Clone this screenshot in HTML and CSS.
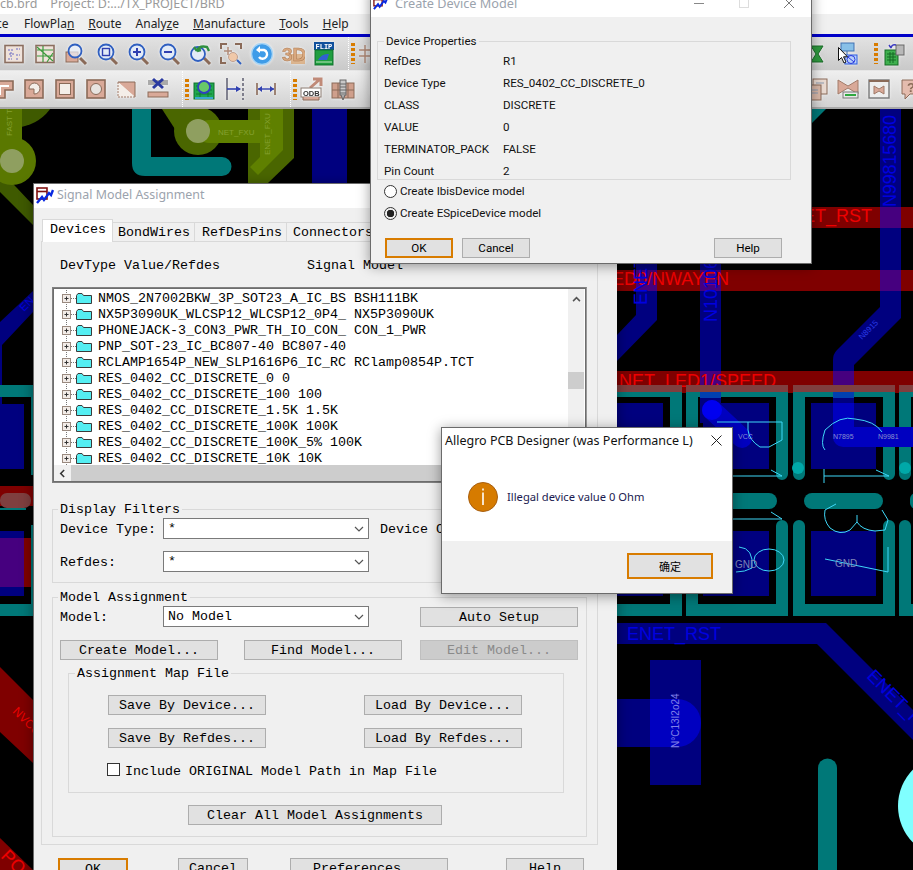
FILE: index.html
```html
<!DOCTYPE html>
<html lang="en">
<head>
    <meta charset="UTF-8">
    <meta name="viewport" content="width=device-width, initial-scale=1.0">
    <title>Allegro PCB Designer</title>
    <link rel="stylesheet" href="styles.css">
</head>
<body>
    <!-- shared little drawings -->
    <svg class="defs" width="0" height="0">
        <symbol id="tree-row" viewBox="0 0 36 16">
            <path d="M4.5 0V16" stroke="#777" stroke-dasharray="1 1"/>
            <path d="M9 8.5H14" stroke="#777" stroke-dasharray="1 1"/>
            <rect x="0.5" y="4.5" width="8" height="8" fill="#f2ece8" stroke="#9a8a80"/>
            <path d="M2.5 8.5H6.5M4.5 6.5V10.5" stroke="#333"/>
            <path d="M14.5 13.5V5.5L16 3.5H20L21.5 5.5H29.5V13.5Z" fill="#55eef2" stroke="#3a3a3a"/>
        </symbol>
        <symbol id="chev" viewBox="0 0 10 6">
            <path d="M1 1L5 5L9 1" fill="none" stroke="#555" stroke-width="1.2"/>
        </symbol>
        <symbol id="app-icon" viewBox="0 0 18 17">
            <rect x="1" y="1" width="10" height="11" fill="#fff" stroke="#7f1010" stroke-width="1.6"/>
            <path d="M1 4.5H11" stroke="#7f1010" stroke-width="1.6"/>
            <path d="M1 16L6 10L8 13L13 6L15 8L17 3" fill="none" stroke="#0a2ae0" stroke-width="2.4"/>
        </symbol>
    </svg>

    <!-- board artwork behind everything -->
    <svg class="board" viewBox="0 0 913 870" width="913" height="870">
        <!-- olive traces top left -->
        <circle cx="12" cy="80" r="48" fill="#3f5a00"/>
        <path d="M0 170L33 205V225L0 192Z" fill="#3f5a00"/>
        <rect x="0" y="100" width="22" height="50" fill="#5a7800"/>
        <circle cx="12" cy="161" r="24" fill="#5a7800"/>
        <circle cx="12" cy="161" r="12" fill="#8f9f60"/>
        <text x="12" y="136" transform="rotate(-90 12 136)" class="t-olive">FAST TX</text>
        <path d="M162 109H190L205 125L182 140Z" fill="#4a6600"/>
        <circle cx="198" cy="131" r="24" fill="#4a6600"/>
        <path d="M248 109H294V158L268 183H248V170L248 165Z" fill="#4a6600"/>
        <path d="M260 109H283V150L258 175L250 167L260 157Z" fill="#5f8000"/>
        <rect x="198" y="120" width="78" height="23" rx="11" fill="#5f8000"/>
        <circle cx="198" cy="131" r="12" fill="#8f9f60"/>
        <text x="218" y="135" class="t-olive">NET_FXU</text>
        <text x="270" y="155" transform="rotate(-90 270 155)" class="t-olive">ENET_FXU</text>
        <path d="M132 109H151V157H222A9.5 9.5 0 0 1 222 176H145Q132 176 132 163Z" fill="#007878"/>
        <rect x="312" y="109" width="35" height="74" fill="#00007f"/>

        <!-- right side nets -->
        <path d="M811 109H826L811 124Z" fill="#007878"/>
        <rect x="811" y="207" width="102" height="21" fill="#7f0000"/>
        <rect x="617" y="270" width="296" height="21" fill="#7f0000"/>
        <rect x="617" y="371" width="296" height="22" fill="#7f0000"/>
        <path d="M880 109H901V318L854 365V440H833V360Q833 354 837 350L880 307Z" fill="#00007f"/>
        <path d="M636 263H657V320L617 361V335L636 315Z" fill="#00007f"/>
        <rect x="700" y="263" width="21" height="160" fill="#00007f"/>
        <g fill="#46007f">
            <rect x="880" y="207" width="21" height="21"/>
            <rect x="880" y="270" width="21" height="21"/>
            <rect x="700" y="270" width="21" height="21"/>
            <rect x="636" y="270" width="21" height="21"/>
            <rect x="700" y="371" width="21" height="22"/>
            <rect x="833" y="371" width="21" height="22"/>
        </g>
        <text x="872" y="222" text-anchor="end" class="t-red">ENET_RST</text>
        <text x="729" y="285" text-anchor="end" class="t-red">NET_LED0/NWAYEN</text>
        <text x="619" y="387" class="t-red">NET_LED1/SPEED</text>
        <text x="896" y="207" transform="rotate(-90 896 207)" class="t-blue" textLength="92">N99815680</text>
        <text x="717" y="322" transform="rotate(-90 717 322)" class="t-blue">N101068</text>
        <text x="647" y="305" transform="rotate(-90 647 305)" class="t-blue">ENET</text>
        <text x="862" y="340" transform="rotate(-45 862 340)" class="t-tiny">N8915</text>

        <!-- pads -->
        <g fill="none" stroke="#007878" stroke-width="12" stroke-linecap="round">
            <path d="M610 391H676V474"/>
            <path d="M692 474V391H782V474"/>
            <path d="M799 474V391H889V474"/>
            <path d="M905 474V391H925"/>
            <path d="M610 610H676V526"/>
            <path d="M692 526V610H782V526"/>
            <path d="M799 526V610H889V526"/>
            <path d="M905 526V610H925"/>
        </g>
        <g fill="#7f3f3f">
            <rect x="617" y="385" width="65" height="7"/>
            <rect x="686" y="385" width="102" height="7"/>
            <rect x="793" y="385" width="102" height="7"/>
            <rect x="899" y="385" width="14" height="7"/>
        </g>
        <g fill="#00007f">
            <rect x="617" y="403" width="46" height="66"/>
            <rect x="703" y="403" width="66" height="66"/>
            <rect x="811" y="403" width="65" height="66"/>
            <rect x="617" y="531" width="46" height="65"/>
            <rect x="703" y="531" width="66" height="65"/>
            <rect x="811" y="531" width="65" height="65"/>
        </g>
        <rect x="700" y="392" width="21" height="6" fill="#0040b0"/>
        <rect x="833" y="392" width="21" height="6" fill="#0040b0"/>
        <path d="M712 410L742 438" stroke="#0000c0" stroke-width="20" stroke-linecap="round"/>
        <circle cx="712" cy="410" r="10" fill="#0000f0"/>
        <rect x="833" y="403" width="21" height="34" fill="#0000c0"/>
        <path d="M843 437H913" stroke="#0000c0" stroke-width="20" stroke-linecap="round"/>
        <circle cx="798" cy="468" r="6" fill="#00a8a8"/>
        <circle cx="905" cy="468" r="6" fill="#00a8a8"/>
        <rect x="700" y="493" width="77" height="16" rx="8" fill="#007878"/>
        <rect x="804" y="493" width="79" height="16" rx="8" fill="#007878"/>
        <rect x="910" y="493" width="12" height="16" rx="6" fill="#007878"/>

        <!-- silk screen -->
        <g fill="none" stroke="#3fd8f8">
            <path d="M717 422H782V440L769 447H760Q749 440 748 430V422"/>
            <path d="M825 450Q820 445 825 430Q840 415 855 419Q875 421 882 432"/>
            <path d="M733 476H782L771 470"/>
            <path d="M824 469V483M824 476H889L876 470"/>
            <path d="M733 519H782L771 512"/>
            <path d="M836 504L825 510Q823 520 830 528Q840 536 850 530L857 522V515M857 522Q862 530 875 531L885 530L888 520L882 510"/>
            <ellipse cx="769" cy="560" rx="15" ry="11"/>
            <path d="M739 547Q754 548 752 568Q745 572 736 572"/>
            <path d="M825 559L888 572V547"/>
        </g>
        <text x="735" y="568" class="t-grey">GND</text>
        <text x="835" y="567" class="t-grey">GND</text>
        <text x="833" y="439" class="t-grey-s">N7895</text>
        <text x="878" y="439" class="t-grey-s">N9981</text>
        <text x="738" y="439" class="t-grey-s">VCC</text>

        <!-- lower right -->
        <path d="M617 623H826L913 710V740L817 644H617Z" fill="#00007f"/>
        <text x="627" y="640" class="t-blue">ENET_RST</text>
        <text x="866" y="677" transform="rotate(45 866 677)" class="t-blue">ENET_RST</text>
        <rect x="650" y="660" width="51" height="125" fill="#00007f"/>
        <path d="M617 699H677A24 24 0 0 1 677 747H617Z" fill="#00007f"/>
        <path d="M650 699H677A24 24 0 0 1 677 747H650Z" fill="#0000c0"/>
        <text x="679" y="748" transform="rotate(-90 679 748)" class="t-pale">N°C13I2o24</text>
        <path d="M818 870V768A9.5 9.5 0 0 1 837 768V870Z" fill="#007878"/>
        <circle cx="950" cy="806" r="52" fill="#80ffff"/>

        <!-- left strip -->
        <path d="M33 291V312L2 345V440H0V322Z" fill="#00007f"/>
        <text x="24" y="312" transform="rotate(-45 24 312)" class="t-small-blue">EN</text>
        <rect x="0" y="385" width="33" height="12" fill="#007878"/>
        <rect x="31" y="385" width="2" height="90" fill="#007878"/>
        <rect x="0" y="404" width="24" height="65" fill="#00007f"/>
        <rect x="0" y="486" width="33" height="20" fill="#7f0000"/>
        <rect x="0" y="493" width="31" height="15" rx="7" fill="#7f3f3f"/>
        <rect x="0" y="508" width="26" height="2" fill="#007878"/>
        <rect x="31" y="525" width="2" height="80" fill="#007878"/>
        <rect x="0" y="531" width="24" height="65" fill="#00007f"/>
        <rect x="0" y="538" width="24" height="49" fill="#46007f"/>
        <rect x="24" y="538" width="7" height="49" fill="#7f0000"/>
        <rect x="0" y="604" width="33" height="12" fill="#007878"/>
        <path d="M0 667L33 700V763L0 732Z" fill="#7f0000"/>
        <text x="12" y="712" transform="rotate(45 12 712)" class="t-small-red">NVCC</text>
        <path d="M0 838L33 870H0Z" fill="#7f0000"/>
        <text x="0" y="857" transform="rotate(45 0 857)" class="t-red">PO</text>
    </svg>

    <!-- main application window -->
    <div class="app">
        <div class="app-title">cb.brd&nbsp;&nbsp;&nbsp;&nbsp;Project: D:.../TX_PROJECT/BRD</div>
        <div class="menu">
            <span class="cut">ce</span>
            <span>FlowPla<u>n</u></span>
            <span><u>R</u>oute</span>
            <span>Analy<u>z</u>e</span>
            <span><u>M</u>anufacture</span>
            <span><u>T</u>ools</span>
            <span><u>H</u>elp</span>
        </div>
        <div class="blue-rule"></div>

        <div class="toolbar tb-one">
            <div class="tool-group start-a">
                <span class="tool"><svg viewBox="0 0 24 24"><rect x="3" y="3.5" width="18" height="17" fill="#efe2da" stroke="#8b6f60" stroke-width="1.6"/><path d="M6 8H11M14 7H18M7 12H12M9 10V16M14 13H18M6 17H10M14 17H17" stroke="#6a6ac4" stroke-dasharray="2 1"/></svg></span>
                <span class="tool"><svg viewBox="0 0 24 24"><rect x="3" y="3.5" width="18" height="17" fill="#efe2da" stroke="#8b6f60" stroke-width="1.6"/><path d="M4 8H20M4 14H20M10 4V20M4 5L20 19M14 20L20 11" stroke="#3c9a3c" stroke-width="1.2"/></svg></span>
                <span class="tool"><svg viewBox="0 0 24 24"><path d="M16 16L22 22" stroke="#8a6a58" stroke-width="3"/><rect x="2" y="10" width="12" height="10" fill="#d9a998" stroke="#8a6a58"/><circle cx="11" cy="9" r="6.5" fill="#e8eef8" fill-opacity=".7" stroke="#2f5fc0" stroke-width="1.8"/></svg></span>
                <span class="tool"><svg viewBox="0 0 24 24"><path d="M16 16L22 22" stroke="#8a6a58" stroke-width="3"/><circle cx="11" cy="10" r="7.5" fill="#e3ebf7" stroke="#2f5fc0" stroke-width="1.8"/><rect x="7.5" y="6.5" width="7" height="7" fill="none" stroke="#2f3fb0" stroke-width="1.4"/></svg></span>
                <span class="tool"><svg viewBox="0 0 24 24"><path d="M16 16L22 22" stroke="#8a6a58" stroke-width="3"/><circle cx="11" cy="10" r="7.5" fill="#e3ebf7" stroke="#2f5fc0" stroke-width="1.8"/><path d="M7 10H15M11 6V14" stroke="#2f3fb0" stroke-width="2"/></svg></span>
                <span class="tool"><svg viewBox="0 0 24 24"><path d="M16 16L22 22" stroke="#8a6a58" stroke-width="3"/><circle cx="11" cy="10" r="7.5" fill="#e3ebf7" stroke="#2f5fc0" stroke-width="1.8"/><path d="M7 10H15" stroke="#2f3fb0" stroke-width="2"/></svg></span>
                <span class="tool"><svg viewBox="0 0 24 24"><path d="M16 16L22 22" stroke="#8a6a58" stroke-width="3"/><circle cx="10" cy="12" r="7" fill="#e3ebf7" stroke="#2f5fc0" stroke-width="1.8"/><path d="M9 9Q11 3 19 5L21 9M9 9L6 5M9 9L13 8" fill="none" stroke="#2f8f3f" stroke-width="2.4"/></svg></span>
                <span class="tool"><svg viewBox="0 0 24 24"><path d="M2 7V2H8M16 2H22V7M2 15V21H7" fill="none" stroke="#8a6a58" stroke-width="2"/><path d="M9 5V13M5 9H13" stroke="#b08a78" stroke-width="1.5"/><circle cx="14" cy="15" r="4.5" fill="#f0c8a8" stroke="#c0a090"/><path d="M18 18L22 22" stroke="#2f5fc0" stroke-width="2"/></svg></span>
                <span class="tool"><svg viewBox="0 0 24 24"><circle cx="12" cy="12" r="10.5" fill="#3f9ce8" stroke="#a8d4f4" stroke-width="1.4"/><path d="M8 8H14A4.5 4.5 0 1 1 9 15" fill="none" stroke="#fff" stroke-width="2.4"/><path d="M10 4L6 8L10 11Z" fill="#fff"/></svg></span>
                <span class="tool"><svg viewBox="0 0 24 24"><rect x="10" y="12" width="14" height="10" fill="#d8a878" opacity=".8"/><text x="1" y="19" class="ic-3d">3D</text></svg></span>
                <span class="tool"><svg viewBox="0 0 24 24"><rect x="2" y="0" width="20" height="8" fill="#10509c"/><text x="3.5" y="7" class="ic-flip">FLIP</text><rect x="3" y="8" width="18" height="15" fill="#1f9e3f" stroke="#0f6f2a"/><path d="M6 18Q10 11 17 12L15 18Z" fill="#3060d0"/><path d="M4 20H20" stroke="#bfe8c0"/></svg></span>
            </div>
            <span class="sep"></span><span class="grip"></span>
            <span class="tool"><svg viewBox="0 0 24 24"><path d="M1 8H23M1 14H23M7 3V21M13 3V21M19 3V21" stroke="#b08874" stroke-width="1.4"/></svg></span>

            <div class="tool-group right">
                <span class="tool"><svg viewBox="0 0 24 24"><path d="M6 4H18L13 12L18 20H6L11 12Z" fill="#2f9a3f" stroke="#1a6a28"/></svg></span>
                <span class="tool"><svg viewBox="0 0 24 24"><rect x="5" y="1" width="13" height="8" fill="#88c0e8" stroke="#4070b0"/><path d="M11 9V13" stroke="#4070b0"/><rect x="9" y="13" width="12" height="9" fill="#b8d0f8" stroke="#2a5ae0"/><circle cx="15" cy="17.5" r="4" fill="none" stroke="#2a3ae0"/><path d="M12 15L18 20" stroke="#2a3ae0"/></svg></span>
                <span class="sep"></span><span class="grip"></span>
                <span class="tool"><svg viewBox="0 0 24 24"><rect x="3" y="8" width="13" height="15" fill="#3fb04f" stroke="#146a24"/><path d="M5 12H14M5 15H14M5 18H14M8 10V21M11 10V21" stroke="#146a24"/><rect x="14" y="3" width="8" height="10" fill="#b8b8b8" stroke="#666"/><path d="M9 6Q10 2 14 3M9 6L7 3" fill="none" stroke="#3a3ac0" stroke-width="1.4"/></svg></span>
            </div>
        </div>

        <div class="toolbar tb-two">
            <div class="tool-group start-b">
                <span class="tool"><svg viewBox="0 0 24 24"><path d="M4 4H22V13H14V21H4Z" fill="#d9a998" stroke="#8a6a58" stroke-width="1.6"/><path d="M8 8H18V10H10V18H8Z" fill="#fff"/></svg></span>
                <span class="tool"><svg viewBox="0 0 24 24"><rect x="3" y="3" width="18" height="18" fill="#d9a998" stroke="#8a6a58" stroke-width="1.6"/><path d="M7 12A5.5 5.5 0 1 1 12 17V12Z" fill="#f4eee8" stroke="#8a6a58"/></svg></span>
                <span class="tool"><svg viewBox="0 0 24 24"><rect x="3" y="3" width="18" height="18" fill="#d9a998" stroke="#8a6a58" stroke-width="1.6"/><rect x="6.5" y="6.5" width="11" height="11" fill="#f4eee8" stroke="#8a6a58"/></svg></span>
                <span class="tool"><svg viewBox="0 0 24 24"><rect x="3" y="3" width="18" height="18" fill="#d9a998" stroke="#8a6a58" stroke-width="1.6"/><circle cx="12" cy="12" r="5.5" fill="#e8e4e0" stroke="#8a6a58"/></svg></span>
                <span class="tool"><svg viewBox="0 0 24 24"><path d="M3 5H20V20Z" fill="#d9a998"/><path d="M3 5V20H20" fill="#f4eee8" stroke="#a07a68" stroke-dasharray="2 1"/><path d="M3 5H20V20" fill="none" stroke="#8a6a58"/></svg></span>
                <span class="tool"><svg viewBox="0 0 24 24"><rect x="2" y="3" width="20" height="5" fill="#aaa"/><path d="M7 2L17 11M17 2L7 11" stroke="#2a3aa0" stroke-width="3"/><rect x="2" y="15" width="20" height="5" fill="#d9a998" stroke="#8a6a58"/></svg></span>
            </div>
            <span class="sep"></span><span class="grip"></span>
            <span class="tool"><svg viewBox="0 0 24 24"><rect x="2" y="6" width="20" height="16" fill="#1fa84f" stroke="#0f6f2a"/><path d="M4 9H20M4 13H20M4 17H20M8 7V20M16 7V20" stroke="#0f6f2a" stroke-width=".8"/><circle cx="12" cy="10" r="6" fill="#68c868" stroke="#3040c0" stroke-width="1.8"/><path d="M3 21H21" stroke="#3aa8d0" stroke-width="2"/></svg></span>
            <span class="tool"><svg viewBox="0 0 24 24"><path d="M4 1V23" stroke="#667" stroke-width="1.6"/><path d="M4 12H17" stroke="#3040b0" stroke-width="1.6"/><path d="M13 9L18 12L13 15Z" fill="#3040b0"/><path d="M20 1V23" stroke="#667" stroke-width="1.6" stroke-dasharray="3 2"/></svg></span>
            <span class="tool"><svg viewBox="0 0 24 24"><path d="M3 6V18M21 6V18" stroke="#8a6a58" stroke-width="1.6"/><path d="M4 12H20" stroke="#3040b0" stroke-width="1.4"/><path d="M8 9L4 12L8 15ZM16 9L20 12L16 15Z" fill="#3040b0"/></svg></span>
            <span class="sep"></span><span class="grip"></span>
            <span class="tool"><svg viewBox="0 0 24 24"><path d="M10 11L19 3M13 2H21V9" fill="none" stroke="#c08a78" stroke-width="3"/><rect x="1" y="11" width="20" height="9" fill="#fff" stroke="#8a7a70"/><text x="3" y="18.5" class="ic-odb">ODB</text><path d="M3 20V23H19V20" fill="#d9a998" stroke="#8a6a58"/></svg></span>
            <span class="tool"><svg viewBox="0 0 24 24"><rect x="1" y="6" width="22" height="15" fill="#cf9f8c" stroke="#8a6a58"/><path d="M1 13H23M7 6V21M17 6V21" stroke="#8a6a58"/><rect x="9" y="3" width="6" height="15" fill="#c8c8c8" stroke="#666"/><path d="M9 7H15M9 10H15M9 13H15M9 16H15M10 18L12 23L14 18" stroke="#666" fill="#aaa"/></svg></span>
            <span class="tool"><svg viewBox="0 0 24 24"><rect x="9" y="3" width="6" height="15" fill="#c8c8c8" stroke="#666"/><path d="M9 7H15M9 10H15M9 13H15M9 16H15" stroke="#666"/></svg></span>

            <div class="tool-group right last">
                <span class="tool"><svg viewBox="0 0 24 24"><rect x="8" y="2" width="14" height="15" fill="#eadbd2" stroke="#8a6a58"/><rect x="2" y="8" width="14" height="15" fill="#d9b8a8" stroke="#8a6a58"/><path d="M5 13H13M5 16H13M11 6H19" stroke="#8a9ab0"/></svg></span>
                <span class="tool"><svg viewBox="0 0 24 24"><path d="M2 3L12 9L22 3V17L12 11L2 17Z" fill="#d9a998" stroke="#a07a68"/><rect x="7" y="15" width="15" height="6" fill="#e8e8e8" stroke="#777"/><path d="M9 18H20" stroke="#2fa83f" stroke-width="2"/></svg></span>
                <span class="tool"><svg viewBox="0 0 24 24"><rect x="2" y="3" width="20" height="18" fill="#eee" stroke="#777" stroke-width="1.4"/><path d="M2 4H22" stroke="#8a6a58" stroke-width="2"/><path d="M7 9L12 12L17 9V17L12 14L7 17Z" fill="#d9a998" stroke="#a07a68"/></svg></span>
                <span class="tool"><svg viewBox="0 0 24 24"><path d="M4 3H22V17H12L7 22V17H4Z" fill="#e4bcae" stroke="#8a6a58"/><text x="9" y="15" class="ic-q">?</text></svg></span>
            </div>
        </div>
    </div>

    <!-- mouse pointer left over the toolbar -->
    <svg class="pointer" viewBox="0 0 10 17" width="10" height="17"><path d="M0.5 0.5V13.5L3.5 10.5L6 16L8 15L5.5 9.8H9.5Z" fill="#fff" stroke="#111"/></svg>

    <!-- Signal Model Assignment -->
    <div class="window signal">
        <div class="title-bar sig-title">
            <svg class="win-icon" width="18" height="17"><use href="#app-icon"/></svg>
            <span>Signal Model Assignment</span>
        </div>
        <div class="tabs">
            <span class="tab on">Devices</span>
            <span class="tab w-bond">BondWires</span>
            <span class="tab w-ref">RefDesPins</span>
            <span class="tab w-conn">Connectors</span>
        </div>
        <div class="panel">
            <div class="col-head"><span class="h-type">DevType Value/Refdes</span><span>Signal Model</span></div>
            <div class="list">
                <div class="list-top">
                    <div class="tree">
                        <div class="tree-row"><svg width="36" height="16"><use href="#tree-row"/></svg>NMOS_2N7002BKW_3P_SOT23_A_IC_BS BSH111BK</div>
                        <div class="tree-row"><svg width="36" height="16"><use href="#tree-row"/></svg>NX5P3090UK_WLCSP12_WLCSP12_0P4_ NX5P3090UK</div>
                        <div class="tree-row"><svg width="36" height="16"><use href="#tree-row"/></svg>PHONEJACK-3_CON3_PWR_TH_IO_CON_ CON_1_PWR</div>
                        <div class="tree-row"><svg width="36" height="16"><use href="#tree-row"/></svg>PNP_SOT-23_IC_BC807-40 BC807-40</div>
                        <div class="tree-row"><svg width="36" height="16"><use href="#tree-row"/></svg>RCLAMP1654P_NEW_SLP1616P6_IC_RC RClamp0854P.TCT</div>
                        <div class="tree-row"><svg width="36" height="16"><use href="#tree-row"/></svg>RES_0402_CC_DISCRETE_0 0</div>
                        <div class="tree-row"><svg width="36" height="16"><use href="#tree-row"/></svg>RES_0402_CC_DISCRETE_100 100</div>
                        <div class="tree-row"><svg width="36" height="16"><use href="#tree-row"/></svg>RES_0402_CC_DISCRETE_1.5K 1.5K</div>
                        <div class="tree-row"><svg width="36" height="16"><use href="#tree-row"/></svg>RES_0402_CC_DISCRETE_100K 100K</div>
                        <div class="tree-row"><svg width="36" height="16"><use href="#tree-row"/></svg>RES_0402_CC_DISCRETE_100K_5% 100K</div>
                        <div class="tree-row"><svg width="36" height="16"><use href="#tree-row"/></svg>RES_0402_CC_DISCRETE_10K 10K</div>
                    </div>
                    <div class="vbar">
                        <svg class="arrow-up" viewBox="0 0 10 7" width="9" height="6"><path d="M1 6L5 2L9 6" fill="none" stroke="#555" stroke-width="1.8"/></svg>
                        <div class="vthumb"></div>
                    </div>
                </div>
                <div class="hbar">
                    <svg class="arrow-left" viewBox="0 0 7 10" width="6" height="9"><path d="M6 1L2 5L6 9" fill="none" stroke="#333" stroke-width="1.8"/></svg>
                    <div class="hthumb"></div>
                </div>
            </div>

            <fieldset class="group filters">
                <legend>Display Filters</legend>
                <div class="field-row">
                    <label>Device Type:</label>
                    <div class="combo">*<svg width="10" height="6"><use href="#chev"/></svg></div>
                    <label class="class-label">Device Class:</label>
                </div>
                <div class="field-row">
                    <label>Refdes:</label>
                    <div class="combo">*<svg width="10" height="6"><use href="#chev"/></svg></div>
                </div>
            </fieldset>

            <fieldset class="group assign">
                <legend>Model Assignment</legend>
                <div class="field-row model-row">
                    <label>Model:</label>
                    <div class="combo">No Model<svg width="10" height="6"><use href="#chev"/></svg></div>
                    <button class="btn w158 auto">Auto Setup</button>
                </div>
                <div class="btn-row">
                    <button class="btn w158">Create Model...</button>
                    <button class="btn w158 find">Find Model...</button>
                    <button class="btn w158 off">Edit Model...</button>
                </div>
                <fieldset class="group map">
                    <legend>Assignment Map File</legend>
                    <div class="map-row">
                        <button class="btn w158">Save By Device...</button>
                        <button class="btn w158 load">Load By Device...</button>
                    </div>
                    <div class="map-row second">
                        <button class="btn w158">Save By Refdes...</button>
                        <button class="btn w158 load">Load By Refdes...</button>
                    </div>
                    <div class="check-row"><span class="check"></span>Include ORIGINAL Model Path in Map File</div>
                </fieldset>
                <button class="btn clear">Clear All Model Assignments</button>
            </fieldset>
        </div>
        <div class="foot">
            <button class="btn focus f-ok">OK</button>
            <button class="btn f-cancel">Cancel</button>
            <button class="btn w158 f-pref">Preferences...</button>
            <button class="btn f-help">Help</button>
        </div>
    </div>

    <!-- Create Device Model -->
    <div class="window create">
        <div class="title-bar create-title">
            <svg class="win-icon small" width="15" height="14"><use href="#app-icon"/></svg>
            <span>Create Device Model</span>
            <span class="caps">
                <svg width="10" height="10"><path d="M0 5.5H10" stroke="#888"/></svg>
                <svg width="10" height="10"><rect x="0.5" y="0.5" width="9" height="9" fill="none" stroke="#ddd"/></svg>
                <svg width="10" height="10"><path d="M0 0L10 10M10 0L0 10" stroke="#777"/></svg>
            </span>
        </div>
        <fieldset class="group props">
            <legend>Device Properties</legend>
            <div class="prop-grid">
                <span>RefDes</span><span>R1</span>
                <span>Device Type</span><span>RES_0402_CC_DISCRETE_0</span>
                <span>CLASS</span><span>DISCRETE</span>
                <span>VALUE</span><span>0</span>
                <span>TERMINATOR_PACK</span><span>FALSE</span>
                <span>Pin Count</span><span>2</span>
            </div>
        </fieldset>
        <div class="radio-row"><span class="radio"></span>Create IbisDevice model</div>
        <div class="radio-row"><span class="radio on"></span>Create ESpiceDevice model</div>
        <div class="create-btns">
            <button class="btn ui focus c-ok">OK</button>
            <button class="btn ui c-cancel">Cancel</button>
            <button class="btn ui c-help">Help</button>
        </div>
    </div>

    <!-- message box -->
    <div class="window alert">
        <div class="alert-title">
            <span>Allegro PCB Designer (was Performance L)</span>
            <svg width="11" height="11"><path d="M0.5 0.5L10.5 10.5M10.5 0.5L0.5 10.5" stroke="#222"/></svg>
        </div>
        <div class="alert-body">
            <svg width="30" height="30" viewBox="0 0 30 30"><circle cx="15" cy="15" r="14.5" fill="#d67b00" stroke="#a85f10"/><path d="M15 10.5V23" stroke="#fff" stroke-width="1.6"/><path d="M15 6.5V8.5" stroke="#fff" stroke-width="1.6"/></svg>
            <span>Illegal device value 0 Ohm</span>
        </div>
        <div class="alert-foot"><button class="btn ui focus alert-ok">确定</button></div>
    </div>
</body>
</html>
```

FILE: styles.css
```css
/* Base */
html, body {
    margin: 0;
    padding: 0;
    width: 913px;
    height: 870px;
    overflow: hidden;
    background: #000;
}

body {
    position: relative;
    font-family: "Liberation Mono", monospace;
    font-size: 13.33px;
    color: #000;
}

.defs {
    position: absolute;
}

/* Board canvas */
.board {
    position: absolute;
    left: 0;
    top: 0;
}

.board text {
    font-family: "Liberation Sans", sans-serif;
}

.t-red { font-size: 18px; fill: #ee0000; }
.t-blue { font-size: 18px; fill: #0000e0; }
.t-olive { font-size: 8px; fill: #85a030; }
.t-tiny { font-size: 8px; fill: #2a3ae8; }
.t-grey { font-size: 10px; fill: #7f86b8; }
.t-grey-s { font-size: 7px; fill: #8a90d0; }
.t-pale { font-size: 10px; fill: #8080e8; }
.t-small-blue { font-size: 11px; fill: #0000e0; }
.t-small-red { font-size: 12px; fill: #ee0000; }

/* Application window */
.app {
    position: absolute;
    left: 0;
    top: 0;
    width: 913px;
    height: 109px;
    overflow: hidden;
    background: #f0f0f0;
    font-family: "Noto Sans", sans-serif;
}

.app-title {
    height: 14px;
    background: #fff;
    color: #9a9a9a;
    font-size: 12.5px;
    line-height: 8px;
    white-space: nowrap;
}

.menu {
    display: flex;
    gap: 14px;
    box-sizing: border-box;
    height: 20px;
    padding-bottom: 1px;
    align-items: center;
    font-size: 12px;
    color: #222;
}

.menu .cut {
    width: 14px;
    margin-left: -4px;
}

.blue-rule {
    height: 3px;
    background: #0000c8;
}

.toolbar {
    display: flex;
    align-items: center;
    overflow: hidden;
}

.tb-one {
    height: 33px;
    background: linear-gradient(#e2e2e2, #c9c9c9);
    border-bottom: 1px solid #e6e6e6;
}

.tb-two {
    height: 36px;
    background: linear-gradient(#efefef, #d2d2d2);
    border-bottom: 2px solid #a8a8a8;
}

.tool-group {
    display: flex;
    align-items: center;
}

.start-a { margin-left: -1.5px; }
.start-b { margin-left: -12.5px; }

.tool-group.right {
    margin-left: auto;
    padding-right: 4px;
}

.tool-group.right.last {
    padding-right: 0;
    margin-right: -12px;
}

.tool {
    flex: none;
    width: 31px;
    height: 24px;
    display: flex;
    justify-content: center;
}

.tool svg {
    width: 24px;
    height: 24px;
    filter: drop-shadow(0 0 1.5px #f6f6f6);
}

.ic-3d { font: bold 19px "Liberation Sans", sans-serif; fill: #d9a87f; stroke: #a9774f; stroke-width: .5px; }
.ic-flip { font: bold 7px "Liberation Mono", monospace; fill: #fff; }
.ic-odb { font: bold 7.5px "Liberation Sans", sans-serif; fill: #333; }
.ic-q { font: bold 13px "Liberation Sans", sans-serif; fill: #8a6a58; }

.sep {
    flex: none;
    width: 1px;
    height: 100%;
    margin-left: 8px;
    border-left: 1px dotted #fff;
    box-sizing: border-box;
}

.grip {
    flex: none;
    width: 4px;
    height: 21px;
    margin-left: 2px;
    background: repeating-linear-gradient(#d87c00 0 3px, transparent 3px 5px);
}

.pointer {
    position: absolute;
    left: 838px;
    top: 47px;
}

/* Windows */
.window {
    position: absolute;
    box-sizing: border-box;
    background: #f0f0f0;
    border: 1px solid #6b6b6b;
    box-shadow: 0 2px 12px rgba(0, 0, 0, .4);
    overflow: hidden;
}

.title-bar {
    display: flex;
    align-items: center;
    background: #fff;
    color: #9ba3ad;
    font-family: "Noto Sans", sans-serif;
    font-size: 12.4px;
}

.win-icon {
    flex: none;
    margin-right: 3px;
}

.group {
    margin: 0;
    padding: 0;
    min-width: 0;
    border: 1px solid #d9d9d9;
}

/* legend text sits a pixel under the frame line */
.group > legend {
    margin-left: 5px;
    padding: 2px 2px 0;
    line-height: 16px;
}

.btn {
    box-sizing: border-box;
    height: 20px;
    margin: 0;
    padding: 2px 0 0;
    background: #e1e1e1;
    border: 1px solid #adadad;
    color: #000;
    font: inherit;
    line-height: 16px;
}

.btn.ui {
    padding: 0;
    font-family: Roboto, sans-serif;
    font-size: 11.6px;
}

.btn.off {
    background: #cccccc;
    border-color: #bfbfbf;
    color: #8a8a8a;
}

.btn.focus {
    border: 2px solid #d87c00;
}

.w158 {
    width: 158px;
}

/* Signal Model Assignment */
.signal {
    left: 33px;
    top: 183px;
    width: 584px;
    height: 700px;
    border-width: 1px 0 0 1px;
}

.sig-title {
    box-sizing: border-box;
    height: 24px;
    padding: 0 0 4px 2px;
}

.sig-title .win-icon {
    margin-top: 2px;
}

.tabs {
    display: flex;
    align-items: flex-end;
    height: 22px;
    margin: 12px 0 -1px 8px;
    position: relative;
}

.tab {
    box-sizing: border-box;
    height: 20px;
    line-height: 20px;
    padding-left: 5px;
    background: #f0f0f0;
    border: 1px solid #d9d9d9;
    border-left: 0;
}

.tab.on {
    width: 71px;
    height: 23px;
    padding-left: 7px;
    line-height: 20px;
    background: #fff;
    border-left: 1px solid #d9d9d9;
    border-bottom: 0;
}

.w-bond { width: 82px; }
.w-ref { width: 92px; padding-left: 7px; }
.w-conn { width: 92px; padding-left: 6px; }

.panel {
    box-sizing: border-box;
    width: 557px;
    height: 604px;
    margin-left: 7px;
    padding: 16px 0 0 10px;
    border: 1px solid #d9d9d9;
}

.col-head {
    display: flex;
    line-height: 16px;
    padding-left: 8px;
    white-space: pre;
}

.h-type {
    width: 247px;
}

.list {
    box-sizing: border-box;
    width: 535px;
    height: 196px;
    margin-top: 13px;
    padding: 1px 2px 1px 1px;
    border: 1px solid #808080;
    border-right-color: #999;
    box-shadow: inset 0 0 0 1px #6e6e6e;
    display: flex;
    flex-direction: column;
    background: #fff;
}

.list-top {
    flex: 1;
    min-height: 0;
    display: flex;
}

.tree {
    flex: 1;
    min-width: 0;
    overflow: hidden;
    padding-top: 1px;
}

.tree-row {
    display: flex;
    align-items: center;
    height: 16px;
    padding-left: 8px;
    white-space: pre;
}

.vbar {
    flex: none;
    width: 16px;
    background: #f0f0f0;
    display: flex;
    flex-direction: column;
    align-items: center;
}

.arrow-up {
    margin-top: 7px;
}

.vthumb {
    width: 100%;
    height: 17px;
    margin-top: 70px;
    background: #cdcdcd;
}

.hbar {
    flex: none;
    height: 16px;
    background: #f0f0f0;
    display: flex;
    align-items: center;
}

.arrow-left {
    margin: 0 6px 0 5px;
}

.hthumb {
    width: 430px;
    height: 100%;
    background: #cdcdcd;
}

/* Filter and assignment groups */
.filters {
    box-sizing: border-box;
    width: 535px;
    margin-top: 17px;
    padding: 0 0 10px 7px;
    display: flex;
    flex-direction: column;
    gap: 12px;
}

.filters > legend {
    margin-left: -2px;
}

.field-row {
    display: flex;
    align-items: center;
}

.field-row > label {
    width: 103px;
    padding-top: 2px;
}

.field-row > .class-label {
    width: auto;
    margin-left: 11px;
    white-space: nowrap;
}

.combo {
    flex: none;
    box-sizing: border-box;
    width: 206px;
    height: 21px;
    padding: 0 4px;
    display: flex;
    align-items: center;
    justify-content: space-between;
    background: #fff;
    border: 1px solid #7a7a7a;
}

.assign {
    box-sizing: border-box;
    width: 535px;
    margin-top: 5px;
    padding: 0 0 11px 0;
}

.model-row {
    padding-left: 7px;
}

.auto {
    align-self: flex-end;
    margin-left: 51px;
}

.btn-row {
    display: flex;
    margin-top: 13px;
    padding-left: 7px;
}

.find { margin-left: 26px; }
.btn-row .off { margin-left: 18px; }

.map {
    box-sizing: border-box;
    width: 496px;
    margin: 4px 0 0 15px;
    padding: 13px 0 13px 39px;
}

.map > legend {
    margin-left: -33px;
}

.map-row {
    display: flex;
}

.map-row.second {
    margin-top: 13px;
}

.load {
    margin-left: 98px;
}

.check-row {
    display: flex;
    align-items: center;
    height: 16px;
    margin-top: 15px;
    white-space: pre;
}

.check {
    flex: none;
    box-sizing: border-box;
    width: 13px;
    height: 13px;
    margin: -3px 5px 0 -1px;
    background: #fff;
    border: 1px solid #333;
}

.clear {
    display: block;
    width: 254px;
    margin: 12px 0 0 135px;
}

.foot {
    display: flex;
    margin-top: 13px;
    padding-left: 24px;
}

.f-ok { width: 70px; }
.f-cancel { width: 70px; margin-left: 50px; }
.f-pref { margin-left: 42px; }
.f-help { width: 78px; margin-left: 58px; }

/* Create Device Model */
.create {
    left: 370px;
    top: -12px;
    width: 442px;
    height: 276px;
    font-family: Roboto, sans-serif;
    font-size: 11.6px;
    color: #111;
}

.create-title {
    height: 28px;
    padding-left: 2px;
    font-size: 12.7px;
    white-space: nowrap;
}

.win-icon.small {
    margin-right: 7px;
}

.caps {
    display: flex;
    gap: 35px;
    margin-left: auto;
    margin-right: 17px;
}

.props {
    box-sizing: border-box;
    width: 414px;
    height: 147px;
    margin: 16px 0 0 6px;
    padding: 1px 0 0 6px;
}

.props > legend {
    margin-left: 0;
    padding: 0 2px;
}

.prop-grid {
    display: grid;
    grid-template-columns: 119px 1fr;
    grid-auto-rows: 22px;
    align-items: center;
}

.radio-row {
    display: flex;
    align-items: center;
    height: 22px;
    padding-left: 13px;
}

.radio {
    flex: none;
    box-sizing: border-box;
    width: 13px;
    height: 13px;
    margin-right: 3px;
    border: 1px solid #333;
    border-radius: 50%;
    background: #fff;
}

.radio.on {
    background: radial-gradient(circle, #222 0 3.5px, #f0f0f0 4px);
}

.create-btns {
    display: flex;
    margin: 14px 0 0 14px;
}

.create-btns .btn {
    width: 68px;
}

.c-cancel { margin-left: 9px; }
.c-help { margin-left: 184px; }

/* Message box */
.alert {
    left: 441px;
    top: 427px;
    width: 292px;
    height: 167px;
    display: flex;
    flex-direction: column;
    background: #fff;
    font-family: "Noto Sans", "Noto Sans CJK SC", sans-serif;
}

.alert-title {
    flex: none;
    height: 25px;
    padding: 0 10px 0 3px;
    display: flex;
    align-items: center;
    justify-content: space-between;
    font-size: 12.5px;
    color: #111;
    white-space: nowrap;
}

.alert-body {
    flex: none;
    box-sizing: border-box;
    height: 88px;
    padding: 0 0 0 26px;
    display: flex;
    align-items: center;
    gap: 9px;
    font-size: 11.2px;
    color: #1a1a50;
}

.alert-body span {
    margin-top: -2px;
}

.alert-foot {
    flex: 1;
    background: #f0f0f0;
    display: flex;
    justify-content: flex-end;
    padding: 12px 19px 0 0;
}

.btn.alert-ok {
    width: 86px;
    height: 26px;
    font-family: "Noto Sans CJK SC", sans-serif;
    font-size: 11px;
}
```
